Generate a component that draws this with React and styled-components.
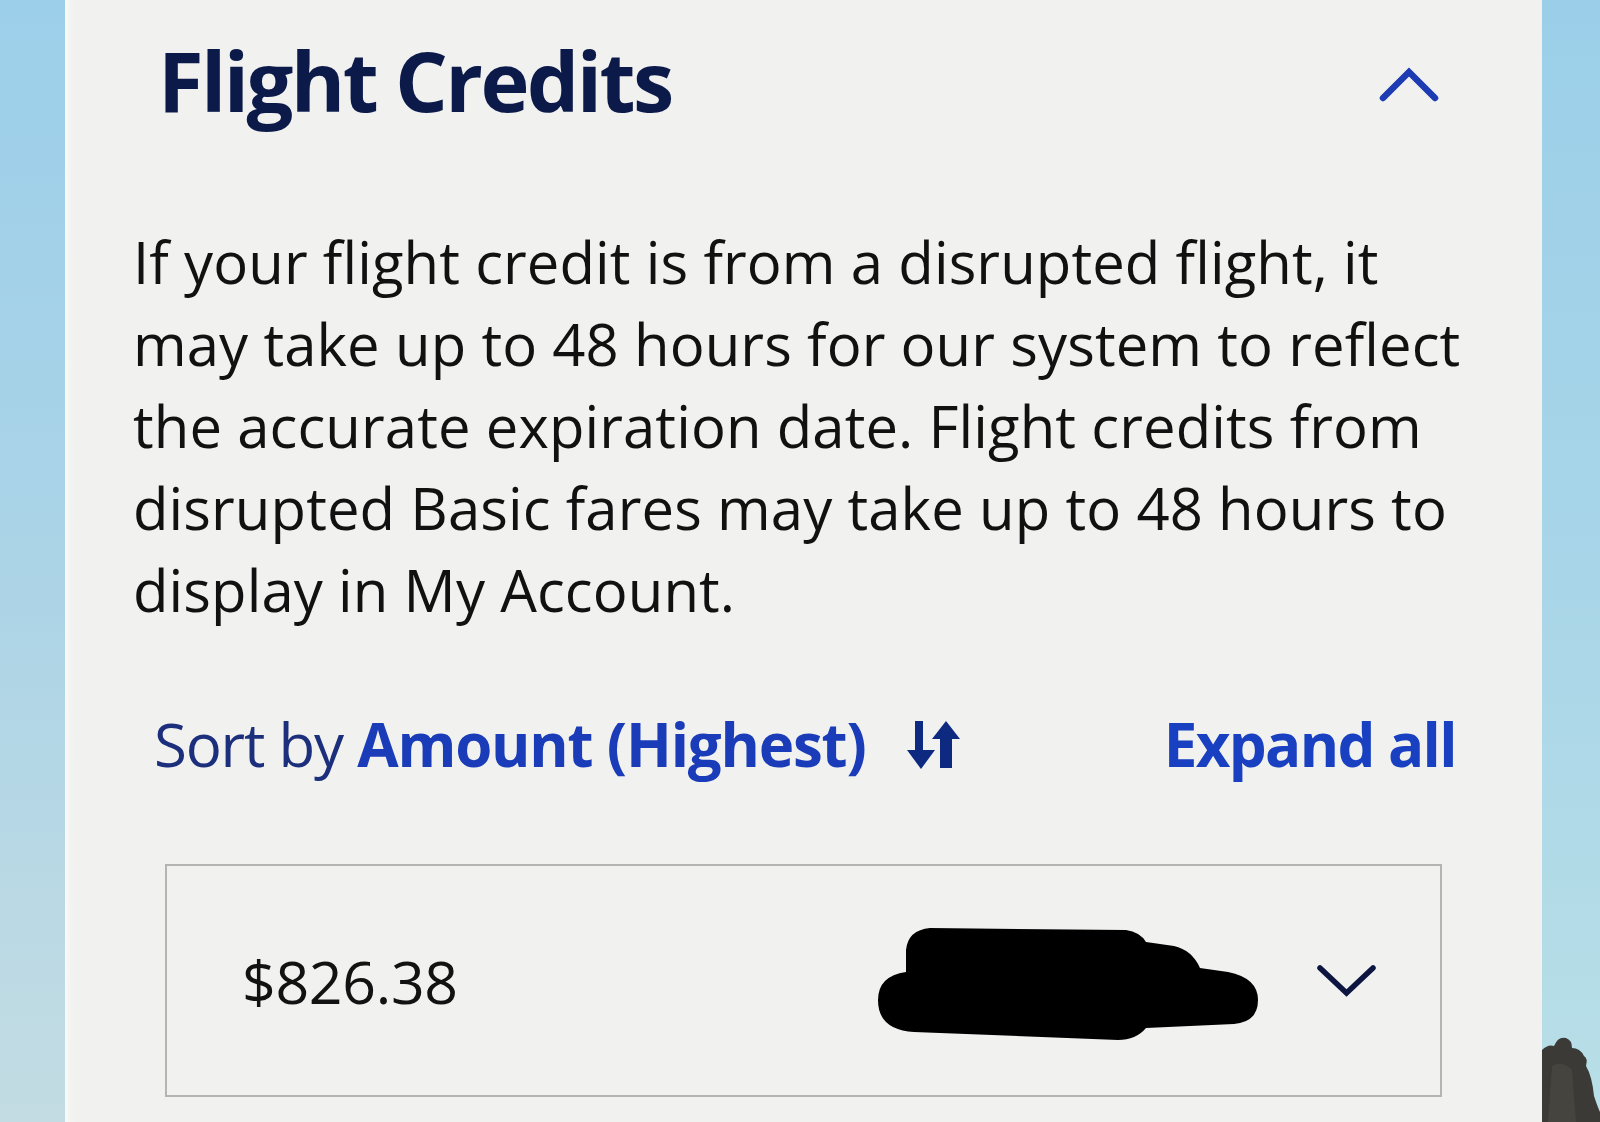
import React from "react";
import styled, { createGlobalStyle } from "styled-components";

const Global = createGlobalStyle`
  html, body { margin: 0; padding: 0; }
  body { font-family: "Open Sans", "Noto Sans", sans-serif; }
  #root { height: 1122px; overflow: hidden; }
`;

const Page = styled.div`
  display: grid;
  grid-template-columns: 65px 1477px 58px;
  height: 1122px;
  overflow: hidden;
`;

const SkyStrip = styled.div`
  display: flex;
  flex-direction: column;
  justify-content: flex-end;
  background: linear-gradient(180deg, #9ccfea 0%, #a9d3e7 45%, #c3dce3 100%);
`;

const SkyStripRight = styled(SkyStrip)`
  background: linear-gradient(180deg, #9bcfe9 0%, #a8d5e8 50%, #b9dfe7 100%);
`;

const Panel = styled.section`
  background: #f1f1ef;
  box-shadow: inset 8px 0 8px -6px rgba(255, 255, 255, 0.9);
  display: flex;
  flex-direction: column;
  padding-top: 30px;
`;

const Header = styled.header`
  display: flex;
  align-items: center;
  justify-content: space-between;
  padding: 0 103px 0 93px;
`;

const Title = styled.h1`
  margin: 0;
  font-size: 83px;
  line-height: 100px;
  font-weight: 700;
  letter-spacing: -2.6px;
  color: #0c1a4a;
`;

const Notice = styled.p`
  margin: 91px 0 0;
  padding-left: 68px;
  font-size: 58px;
  line-height: 82px;
  font-weight: 400;
  color: #111111;
  letter-spacing: 0.1px;
`;

const SortRow = styled.div`
  margin-top: 73px;
  display: flex;
  align-items: center;
  justify-content: space-between;
  padding: 0 86px 0 89px;
  font-size: 60px;
  line-height: 80px;
`;

const SortLabel = styled.div`
  display: flex;
  align-items: center;
  gap: 41px;
  color: #1c2f7c;
  letter-spacing: -1.2px;
`;

const Strong = styled.strong`
  font-weight: 700;
  color: ${(p) => p.$color || "#1a3cb8"};
  letter-spacing: -1.2px;
`;

const LinkButton = styled.button`
  border: 0;
  background: none;
  padding: 0;
  font: inherit;
  font-weight: 700;
  color: #1840c0;
  letter-spacing: -1.6px;
`;

const CreditCard = styled.div`
  margin: 80px 100px 0;
  height: 233px;
  box-sizing: border-box;
  border: 2px solid #b4b4b2;
  display: flex;
  align-items: center;
  padding: 0 63px 0 75px;
`;

const Amount = styled.span`
  font-size: 59px;
  line-height: 80px;
  color: #121212;
  flex: 1;
  letter-spacing: -0.3px;
`;

const Redaction = styled.svg`
  display: block;
  margin-right: 58px;
  margin-top: 6px;
`;

const Tree = styled.svg`
  display: block;
`;

const ChevronUp = () => (
  <svg width="60" height="36" viewBox="0 0 60 36" style={{ marginTop: 8 }}>
    <path d="M4 32 L30 6 L56 32" fill="none" stroke="#1d3bb3" strokeWidth="6.5" strokeLinecap="round" strokeLinejoin="miter" />
  </svg>
);

const ChevronDown = () => (
  <svg width="61" height="34" viewBox="0 0 61 34">
    <path d="M4 4 L30.5 29 L57 4" fill="none" stroke="#0d1640" strokeWidth="5.5" strokeLinecap="round" />
  </svg>
);

const SortIcon = () => (
  <svg width="53" height="49" viewBox="0 0 53 49">
    <g fill="#0d2a80">
      <rect x="8" y="1" width="8" height="30" />
      <polygon points="0,30 28,30 14,49" />
      <polygon points="25,19 39,1 53,19" />
      <rect x="33" y="18" width="12" height="30" />
    </g>
  </svg>
);

export default function App() {
  return (
    <>
      <Global />
      <Page>
        <SkyStrip />
        <Panel>
          <Header>
            <Title>Flight Credits</Title>
            <ChevronUp />
          </Header>
          <Notice>
            If your flight credit is from a disrupted flight, it
            <br />
            may take up to 48 hours for our system to reflect
            <br />
            the accurate expiration date. Flight credits from
            <br />
            disrupted Basic fares may take up to 48 hours to
            <br />
            display in My Account.
          </Notice>
          <SortRow>
            <SortLabel>
              <span>
                Sort by <Strong>Amount (Highest)</Strong>
              </span>
              <SortIcon />
            </SortLabel>
            <LinkButton>Expand all</LinkButton>
          </SortRow>
          <CreditCard>
            <Amount>$826.38</Amount>
            <Redaction width="380" height="112" viewBox="0 0 380 112">
              <path
                d="M52 0 L248 2 Q262 4 268 14 L296 18 Q314 22 322 40 L350 44 Q380 50 380 72 Q380 94 356 96 L268 100 Q258 112 240 112 L36 104 Q0 102 0 72 Q0 48 28 44 L28 22 Q30 2 52 0 Z"
                fill="#000"
              />
            </Redaction>
            <ChevronDown />
          </CreditCard>
        </Panel>
        <SkyStripRight>
          <Tree width="58" height="86" viewBox="0 0 58 86">
            <path
              d="M0 14 Q6 8 12 10 Q16 0 24 2 Q30 4 30 12 Q38 12 42 20 Q46 22 44 30 Q50 40 52 60 Q56 72 58 76 L58 86 L0 86 Z"
              fill="#3b3a36"
            />
            <path d="M10 30 Q20 24 30 34 L34 86 L6 86 Z" fill="#4a4843" opacity="0.7" />
          </Tree>
        </SkyStripRight>
      </Page>
    </>
  );
}
